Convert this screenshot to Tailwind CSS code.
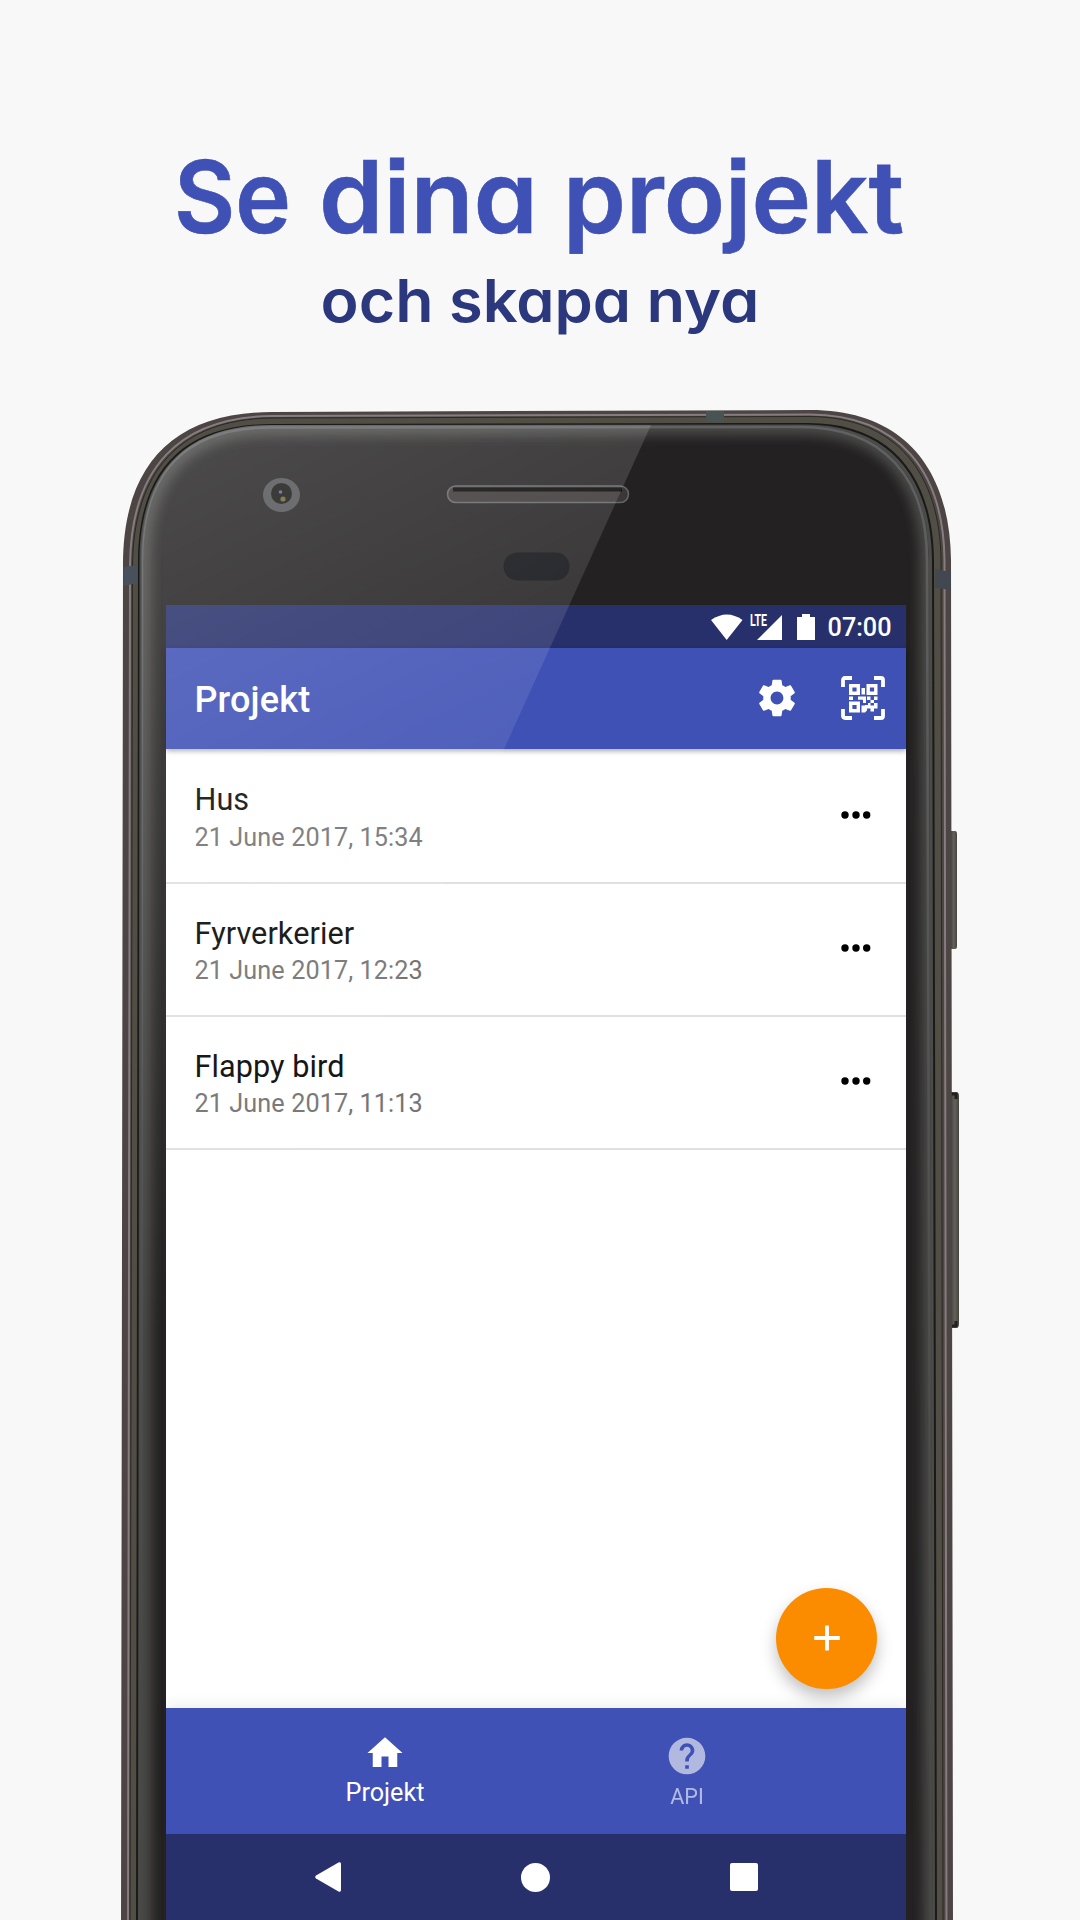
<!DOCTYPE html>
<html lang="sv">
<head>
<meta charset="utf-8">
<title>Projekt</title>
<script src="https://cdn.jsdelivr.net/npm/@tailwindcss/browser@4"></script>
</head>
<body class="bg-[#f8f8f8]">
<main class="relative h-[1920px] w-[1080px] overflow-hidden bg-[#f8f8f8] font-[Roboto,sans-serif]">

  <!-- Headline -->
  <header class="h-[400px]">
    <svg class="block" width="1080" height="400" viewBox="0 0 1080 400">
      <g class="font-[Inter,sans-serif] text-[101px] font-semibold [font-feature-settings:'cv11','ss07']" fill="#3f51b5" stroke="#3f51b5" stroke-width=".6">
        <text x="174" y="233" textLength="117" lengthAdjust="spacingAndGlyphs">Se</text>
        <text x="319" y="233" textLength="219" lengthAdjust="spacingAndGlyphs">dina</text>
        <text x="563" y="233" textLength="341" lengthAdjust="spacingAndGlyphs">projekt</text>
      </g>
      <g class="font-[Inter,sans-serif] text-[59px] font-semibold [font-feature-settings:'cv11','ss07']" fill="#2c387e">
        <text x="320.500" y="322" textLength="113" lengthAdjust="spacingAndGlyphs">och</text>
        <text x="449" y="322" textLength="182" lengthAdjust="spacingAndGlyphs">skapa</text>
        <text x="646.500" y="322" textLength="113" lengthAdjust="spacingAndGlyphs">nya</text>
      </g>
    </svg>
  </header>

  <!-- Phone body -->
  <svg class="absolute inset-0" width="1080" height="1920" viewBox="0 0 1080 1920" fill="none">
    <defs>
      <linearGradient id="btn" x1="0" x2="1"><stop offset="0" stop-color="#3c3b37"/><stop offset=".6" stop-color="#62625a"/><stop offset="1" stop-color="#45443f"/></linearGradient>
      <linearGradient id="rim" gradientUnits="userSpaceOnUse" x1="0" y1="430" x2="0" y2="1700"><stop offset="0" stop-color="#5f6162"/><stop offset="1" stop-color="#484844"/></linearGradient>
      <filter id="soft" x="-5%" y="-5%" width="110%" height="110%"><feGaussianBlur stdDeviation="6"/></filter>
      <clipPath id="glass"><path d="M142 1930V560C142 472 186 427 270 427L800 426C886 426 928 476 929 560L933 1930Z"/></clipPath>
    </defs>
    <path d="M949 831h6q2 0 2 3v112q0 3-2 3h-6z" fill="url(#btn)"/>
    <path d="M949 1092h7q3 0 3 4v228q0 4-3 4h-7z" fill="url(#btn)"/>
    <path d="M951 1094h5v5M951 1326h5v-5" stroke="#22211f" stroke-width="3"/>
    <path d="M121 1930L123 565C123 465 173 412.500 272 412L810 410C905 410 950 470 951 560L953 1930Z" fill="#4c4543"/>
    <path d="M128 1930L130 565C131 469 178 417 272 416L810 414.500C900 415 943.500 472 944.500 560L946.500 1930" stroke="#857d7f" stroke-width="2"/>
    <path d="M130 1930L132.500 565C133.500 471 180 419 272 418L810 416.500C897 417 940 474 941 560L943 1930Z" fill="#514e45" stroke="#2c2923" stroke-width="1"/>
    <path d="M136 1930L138 560C139 470 183 424 272 424L808 423C891 423 933 476 934 560L937 1930Z" fill="#1b1a18"/>
    <path d="M138 1930L139.500 560C140 472 185 425 272 425L806 424.500C889 425 931 476 932 560L935 1930Z" fill="#4b4b49"/>
    <g clip-path="url(#glass)">
      <path d="M142 1930V560C142 472 186 427 270 427L800 426C886 426 928 476 929 560L933 1930Z" fill="#232121"/>
      <path d="M142 1930V560C142 472 186 427 270 427L800 426C886 426 928 476 929 560L933 1930" stroke="#4b4b49" stroke-width="18" filter="url(#soft)"/>
    </g>
    <path d="M141 1930L142 560C142 472 186 427.500 270 427.500L800 427C884 427 927 478 927 560L931 1930" stroke="url(#rim)" stroke-width="2.500"/>
    <!-- Antenna bands -->
    <path d="M123.500 567l14-2v18l-14 3z" fill="#48505b"/>
    <path d="M935 569l16 3v18l-16-2z" fill="#434750"/>
    <path d="M706 411h18v11h-18z" fill="#4a5354"/>
    <!-- Earpiece -->
    <rect x="447.500" y="486" width="181" height="16.500" rx="8.200" fill="#3c3636" stroke="#646568" stroke-width="1.500"/>
    <path d="M453 489.500h169" stroke="#050403" stroke-width="4"/>
    <!-- Proximity sensor -->
    <rect x="503.500" y="552.500" width="66" height="28" rx="14" fill="#0f1015"/>
    <!-- Front camera -->
    <ellipse cx="281.500" cy="495" rx="18.500" ry="17" fill="#515255"/>
    <circle cx="281.500" cy="493.500" r="10.500" fill="#151514"/>
    <circle cx="280.500" cy="492" r="1.800" fill="#62629a"/>
    <circle cx="283" cy="499" r="2.600" fill="#6d6630"/>
  </svg>

  <!-- Screen -->
  <section class="absolute left-[166px] top-[605px] flex h-[1315px] w-[740px] flex-col bg-white">
    <div class="flex h-[43px] shrink-0 items-center justify-end bg-[#27306b] pr-[14.500px] text-white">
      <svg class="mr-[13px] block" width="104" height="26" viewBox="0 0 104 26" fill="#fff">
        <path d="M0 6Q16-5 31.500 6L15.700 26Z"/>
        <path d="M71 26H46L71 1Z"/>
        <path d="M91 0h8v3h5v23H86V3h5z"/>
        <text x="39" y="12" textLength="17" lengthAdjust="spacingAndGlyphs" class="text-[16px] font-bold">LTE</text>
      </svg>
      <span class="pt-[2px] text-[25.200px] leading-[41px] font-medium">07:00</span>
    </div>
    <div class="z-10 flex h-[101px] shrink-0 items-center bg-[#3f51b5] pl-[28.500px] pr-[21px] text-white shadow-[0_2px_5px_rgba(0,0,0,0.35)]">
      <h1 class="flex-1 pt-[2px] text-[36px] leading-none font-medium tracking-[0.150px]">Projekt</h1>
      <svg class="mr-[42.500px] mb-[1px] block" width="44" height="44" viewBox="0 0 24 24" fill="#fff"><path d="M19.430 12.980c.04-.32.07-.64.07-.98s-.03-.66-.07-.98l2.110-1.650c.19-.15.24-.42.12-.64l-2-3.460c-.12-.22-.39-.3-.61-.22l-2.490 1c-.52-.4-1.080-.73-1.690-.98l-.38-2.650C14.460 2.180 14.250 2 14 2h-4c-.25 0-.46.18-.49.42l-.38 2.650c-.61.25-1.170.59-1.690.98l-2.490-1c-.23-.09-.49 0-.61.22l-2 3.460c-.13.22-.07.49.12.64l2.110 1.650c-.04.32-.07.65-.07.98s.03.66.07.98l-2.110 1.650c-.19.15-.24.42-.12.64l2 3.460c.12.22.39.3.61.22l2.490-1c.52.4 1.080.73 1.690.98l.38 2.650c.03.24.24.42.49.42h4c.25 0 .46-.18.49-.42l.38-2.650c.61-.25 1.170-.59 1.690-.98l2.490 1c.23.09.49 0 .61-.22l2-3.460c.12-.22.07-.49-.12-.64l-2.110-1.650zM12 15.500c-1.930 0-3.500-1.570-3.500-3.500s1.570-3.500 3.500-3.500 3.500 1.570 3.500 3.500-1.570 3.500-3.500 3.500z"/></svg>
      <svg class="mb-[1px] block" width="44" height="44" viewBox="0 0 44 44" fill="#fff">
        <path d="M2 11V4q0-2 2-2h7M33 2h7q2 0 2 2v7M42 33v7q0 2-2 2h-7M11 42H4q-2 0-2-2v-7" fill="none" stroke="#fff" stroke-width="3.800"/>
        <path d="M9.700 9.700h7.600v7.600h-7.600zM27.200 9.700h7.600v7.600h-7.600zM9.700 27.200h7.600v7.600h-7.600z" fill="none" stroke="#fff" stroke-width="3.400"/>
        <path d="M20.500 12h3.500v6.500h-3.500zM8 20.500h4v3.500H8zM17 20.500h8v6.500h-3v-3.200h-5zM26 20.500h3.500v3.500H26zM33 20.500h3.500v3.500H33zM29.500 24H33v3h-3.500zM33 27h3.500v5.500H33v3h-3.500v-3H26v2l-2 2h-3.500v-7H24V29h3v-2h2.500v2.500H33z"/>
      </svg>
    </div>

    <ul class="flex-1">
      <li class="flex h-[135px] items-center justify-between border-b-[2px] border-[#e0e0e0] pl-[28.500px] pr-[35.500px]">
        <div class="pt-1"><p class="text-[30.600px] leading-[38px] tracking-[0.080px] text-[#0c0c0c]">Hus</p><p class="pt-[1px] text-[25.200px] leading-[35px] tracking-[0.100px] text-[#757575]">21 June 2017, 15:34</p></div>
        <svg class="mb-[2px]" width="30" height="8" viewBox="0 0 30 8"><circle cx="4" cy="4" r="3.700"/><circle cx="15" cy="4" r="3.700"/><circle cx="25.700" cy="4" r="3.700"/></svg>
      </li>
      <li class="flex h-[133px] items-center justify-between border-b-[2px] border-[#e0e0e0] pl-[28.500px] pr-[35.500px]">
        <div class="pt-[4px]"><p class="text-[30.600px] leading-[38px] tracking-[0.080px] text-[#0c0c0c]">Fyrverkerier</p><p class="text-[25.200px] leading-[36px] tracking-[0.100px] text-[#757575]">21 June 2017, 12:23</p></div>
        <svg class="mb-[3px]" width="30" height="8" viewBox="0 0 30 8"><circle cx="4" cy="4" r="3.700"/><circle cx="15" cy="4" r="3.700"/><circle cx="25.700" cy="4" r="3.700"/></svg>
      </li>
      <li class="flex h-[133px] items-center justify-between border-b-[2px] border-[#e0e0e0] pl-[28.500px] pr-[35.500px]">
        <div class="pt-[4px]"><p class="text-[30.600px] leading-[38px] tracking-[0.080px] text-[#0c0c0c]">Flappy bird</p><p class="text-[25.200px] leading-[36px] tracking-[0.100px] text-[#757575]">21 June 2017, 11:13</p></div>
        <svg class="mb-[3px]" width="30" height="8" viewBox="0 0 30 8"><circle cx="4" cy="4" r="3.700"/><circle cx="15" cy="4" r="3.700"/><circle cx="25.700" cy="4" r="3.700"/></svg>
      </li>
    </ul>

    <button class="absolute left-[610px] top-[983px] flex size-[101px] items-center justify-center rounded-full bg-[#fb8c00] shadow-[0_8px_16px_rgba(0,0,0,0.25)]">
      <svg class="mb-[1px]" width="26" height="26" viewBox="0 0 26 26" stroke="#fff" stroke-width="3.800"><path d="M13 .5v25M.2 13h25.600"/></svg>
    </button>

    <nav class="flex h-[126px] shrink-0 justify-center bg-[#3f51b5] text-white shadow-[0_-4px_12px_rgba(0,0,0,0.07)]">
      <div class="flex w-[302px] flex-col items-center pt-[25px]">
        <svg class="block" width="42" height="38" viewBox="0 1 24 21" fill="#fff"><path d="M10 20v-6h4v6h5v-8h3L12 3 2 12h3v8z"/></svg>
        <span class="mt-[7px] text-[25.200px] leading-[30px]">Projekt</span>
      </div>
      <div class="flex w-[302px] flex-col items-center pt-[26px] opacity-60">
        <svg class="block" width="44" height="44" viewBox="0 0 24 24" fill="#fff"><path d="M12 2C6.480 2 2 6.480 2 12s4.480 10 10 10 10-4.480 10-10S17.520 2 12 2zm1 17h-2v-2h2v2zm2.070-7.750l-.9.920C13.450 12.900 13 13.500 13 15h-2v-.5c0-1.100.45-2.100 1.170-2.830l1.240-1.260c.37-.36.59-.86.59-1.410 0-1.100-.9-2-2-2s-2 .9-2 2H8c0-2.210 1.790-4 4-4s4 1.790 4 4c0 .88-.36 1.680-.93 2.250z"/></svg>
        <span class="mt-[6px] text-[21.600px] leading-[26px]">API</span>
      </div>
    </nav>
    <div class="flex h-[86px] shrink-0 items-center justify-between bg-[#27306b] pl-[149px] pr-[148px]">
      <svg width="27" height="30" viewBox="0 0 27 30" fill="#fff"><path d="M1 13.500L23.500.6Q26-.5 26 2v26q0 2.500-2.500 1.400L1 16.500Q-.6 15 1 13.500z"/></svg>
      <span class="mr-[2px] size-[29px] rounded-full bg-white"></span>
      <span class="size-[28px] rounded-[2px] bg-white"></span>
    </div>
  </section>

  <!-- Diagonal glare over the glass -->
  <svg class="pointer-events-none absolute inset-0 z-20" width="1080" height="1920" viewBox="0 0 1080 1920">
    <defs><linearGradient id="glare" gradientUnits="userSpaceOnUse" x1="200" y1="450" x2="540" y2="1150"><stop offset="0" stop-color="#fff" stop-opacity=".18"/><stop offset="1" stop-color="#fff" stop-opacity="0"/></linearGradient></defs>
    <path d="M142 1548V560C142 472 186 425 270 425H651L504 749Z" fill="url(#glare)"/>
  </svg>
</main>
</body>
</html>
